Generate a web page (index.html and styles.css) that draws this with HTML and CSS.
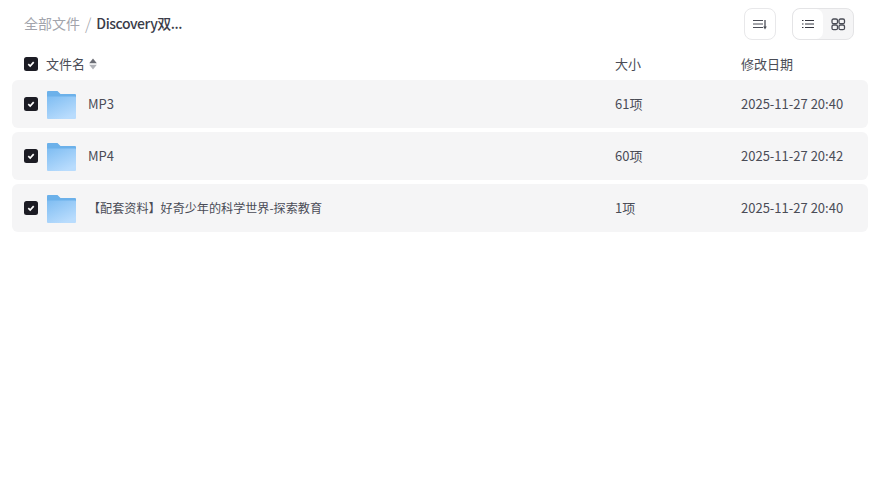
FILE: index.html
```html
<!DOCTYPE html>
<html lang="zh-CN">
<head>
<meta charset="utf-8">
<title>全部文件</title>
<link rel="stylesheet" href="styles.css">
</head>
<body>
<svg class="defs" width="0" height="0" aria-hidden="true">
  <defs>
    <linearGradient id="folderFront" x1="0" y1="0" x2="0.6" y2="1">
      <stop offset="0" stop-color="#7fbdf2"/>
      <stop offset="1" stop-color="#b9dcfd"/>
    </linearGradient>
    <symbol id="folder" viewBox="0 0 29 28">
      <path d="M1 0H10.500L13.500 3H28A1 1 0 0 1 29 4V10H0V1A1 1 0 0 1 1 0Z" fill="#6cb1ea"/>
      <path d="M0 5.500H28A1 1 0 0 1 29 6.500V27A1 1 0 0 1 28 28H1A1 1 0 0 1 0 27Z" fill="url(#folderFront)"/>
    </symbol>
    <symbol id="check" viewBox="0 0 14 14">
      <rect width="14" height="14" rx="2.500" fill="#1c1c24"/>
      <path d="M4.300 7.200 6.200 9 9.700 5.200" fill="none" stroke="#fff" stroke-width="1.700"/>
    </symbol>
  </defs>
</svg>
<main class="page">
  <header class="topbar">
    <nav class="crumbs">
      <span class="crumb-root">全部文件</span>
      <span class="crumb-sep">/</span>
      <span class="crumb-current">Discovery双...</span>
    </nav>
    <div class="tools">
      <button class="btn-sort" aria-label="排序">
        <svg width="16" height="16" viewBox="0 0 16 16" fill="none" stroke="#4a4c56" stroke-width="1.200">
          <path d="M1 4.500H11M1 8H11M1 11.500H11"/>
          <path d="M13 4V11" stroke-width="1.300"/>
          <path d="M11.200 10.500 13 13.500 14.800 10.500Z" fill="#4a4c56" stroke="none"/>
        </svg>
      </button>
      <div class="view-switch">
        <button class="view-btn view-active" aria-label="列表">
          <svg width="16" height="16" viewBox="0 0 16 16" fill="none" stroke="#33353f" stroke-width="1.200">
            <path d="M5 4.500H14M5 8H14M5 11.500H14"/>
            <path d="M2 4.500H3.500M2 8H3.500M2 11.500H3.500"/>
          </svg>
        </button>
        <button class="view-btn" aria-label="网格">
          <svg width="16" height="16" viewBox="0 0 16 16" fill="none" stroke="#4a4c56" stroke-width="1.300">
            <rect x="2" y="3" width="5.500" height="4.700" rx="1.500"/>
            <rect x="9" y="3" width="5.500" height="4.700" rx="1.500"/>
            <rect x="2" y="9" width="5.500" height="4.700" rx="1.500"/>
            <rect x="9" y="9" width="5.500" height="4.700" rx="1.500"/>
          </svg>
        </button>
      </div>
    </div>
  </header>

  <div class="table-head">
    <div class="cell-name">
      <svg class="checkbox"><use href="#check"/></svg>
      <span class="head-name">文件名</span>
      <svg class="sort-caret" width="8" height="12" viewBox="0 0 8 12">
        <path d="M4 0.500 7.800 5.200H0.200Z" fill="#6a6c74"/>
        <path d="M4 11.500 0.200 6.800H7.800Z" fill="#b0b2b8"/>
      </svg>
    </div>
    <div class="cell-size">大小</div>
    <div class="cell-date">修改日期</div>
  </div>

  <div class="rows">
    <div class="row">
      <svg class="checkbox"><use href="#check"/></svg>
      <svg class="folder"><use href="#folder"/></svg>
      <span class="file-name file-name-latin">MP3</span>
      <span class="cell-size">61项</span>
      <span class="cell-date">2025-11-27 20:40</span>
    </div>
    <div class="row">
      <svg class="checkbox"><use href="#check"/></svg>
      <svg class="folder"><use href="#folder"/></svg>
      <span class="file-name file-name-latin">MP4</span>
      <span class="cell-size">60项</span>
      <span class="cell-date">2025-11-27 20:42</span>
    </div>
    <div class="row">
      <svg class="checkbox"><use href="#check"/></svg>
      <svg class="folder"><use href="#folder"/></svg>
      <span class="file-name">【配套资料】好奇少年的科学世界-探索教育</span>
      <span class="cell-size">1项</span>
      <span class="cell-date">2025-11-27 20:40</span>
    </div>
  </div>
</main>
</body>
</html>
```

FILE: styles.css
```css
* { box-sizing: border-box; }
html, body { margin: 0; height: 100%; background: #fff; }
body {
  font-family: "Noto Sans CJK SC", sans-serif;
  font-size: 13px;
  color: #4a4c56;
}
.defs { display: block; height: 0; }
.page { padding: 8px 10px 0 12px; }

.topbar {
  display: flex;
  align-items: center;
  justify-content: space-between;
  height: 32px;
  padding: 0 14px 0 12px;
}
.crumbs { display: flex; align-items: center; font-size: 14px; line-height: 20px; padding-bottom: 2px; }
.crumb-root { color: #a2a4ac; }
.crumb-sep { color: #a2a4ac; margin: 0 5px; font-size: 16px; font-weight: 300; }
.crumb-current { color: #3a3c48; font-weight: 500; letter-spacing: -0.45px; }

.tools { display: flex; align-items: center; gap: 16px; }
button { padding: 0; border: 0; background: none; display: flex; align-items: center; justify-content: center; }
.btn-sort {
  width: 32px;
  height: 32px;
  border: 1px solid #e8e8ea;
  border-radius: 8px;
  background: #fff;
}
.view-switch {
  display: flex;
  width: 62px;
  height: 32px;
  border: 1px solid #e4e4e6;
  border-radius: 8px;
  background: #f5f5f6;
  overflow: hidden;
}
.view-btn { flex: 1; }
.view-active { background: #fff; border-radius: 7px; }

.table-head {
  display: flex;
  align-items: center;
  height: 40px;
  padding: 8px 0 0 12px;
}
.cell-name { display: flex; align-items: center; width: 591px; }
.checkbox { width: 14px; height: 14px; flex: none; }
.head-name { margin: 0 0 2px 8px; }
.sort-caret { margin-left: 4px; }
.cell-size { width: 126px; flex: none; margin-bottom: 2px; }
.cell-date { flex: none; margin-bottom: 2px; }

.rows { display: flex; flex-direction: column; gap: 4px; }
.row {
  display: flex;
  align-items: center;
  height: 48px;
  padding-left: 12px;
  background: #f5f5f6;
  border-radius: 6px;
}
.folder { width: 29px; height: 28px; margin: 2px 0 0 9px; flex: none; }
.file-name { width: 527px; margin: 0 0 2px 12px; flex: none; font-size: 12.1px; }
.file-name-latin { font-size: 13px; }
```
